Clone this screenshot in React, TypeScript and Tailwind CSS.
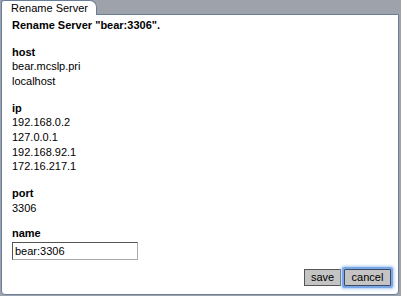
import React from "react";

const font = { fontFamily: '"Liberation Sans", Arial, Helvetica, sans-serif' };

function Section({ label, values, className = "" }: { label: string; values: string[]; className?: string }) {
  return (
    <div className={className}>
      <div className="font-bold">{label}</div>
      {values.map((v) => (
        <div key={v}>{v}</div>
      ))}
    </div>
  );
}

export default function App() {
  return (
    <div
      className="w-[401px] h-[296px] bg-[#9ea3ab] flex flex-col pl-px pr-[2px] pb-px text-[11px] leading-[14.67px] text-black"
      style={font}
    >
      <div className="relative z-10 w-[96px] h-[15px] shrink-0 bg-white border border-b-0 border-[#6a7e99] rounded-tl-[3px] rounded-tr-[7px] pl-[9px] leading-[14px]">
        Rename Server
      </div>
      <div className="-mt-px flex-1 bg-white border border-[#6a7e99] rounded-b-[4px] pl-[10px] pt-[3px] pr-[7px] flex flex-col">
        <div className="font-bold">Rename Server "bear:3306".</div>
        <Section className="mt-[12px]" label="host" values={["bear.mcslp.pri", "localhost"]} />
        <Section className="mt-[12px]" label="ip" values={["192.168.0.2", "127.0.0.1", "192.168.92.1", "172.16.217.1"]} />
        <Section className="mt-[12px]" label="port" values={["3306"]} />
        <div className="mt-[11px] font-bold">name</div>
        <div className="mt-px w-[126px] h-[18px] border border-t-[#555] border-l-[#555] border-b-[#aaa] border-r-[#aaa] pl-[2px] leading-[16px]">
          bear:3306
        </div>
        <div className="flex justify-end items-center gap-[3px] mt-[9px]">
          <button className="w-[37px] h-[17px] bg-[#c4c4c4] border border-[#555] leading-[15px] text-[11px] text-center" style={font}>
            save
          </button>
          <button
            className="w-[47px] h-[17px] bg-[#c4c4c4] border border-[#3d4a66] leading-[15px] text-[11px] text-center shadow-[0_0_0_2px_#79a6e6,0_0_3px_3px_#a9c8f0] rounded-[1px]"
            style={font}
          >
            cancel
          </button>
        </div>
      </div>
    </div>
  );
}
